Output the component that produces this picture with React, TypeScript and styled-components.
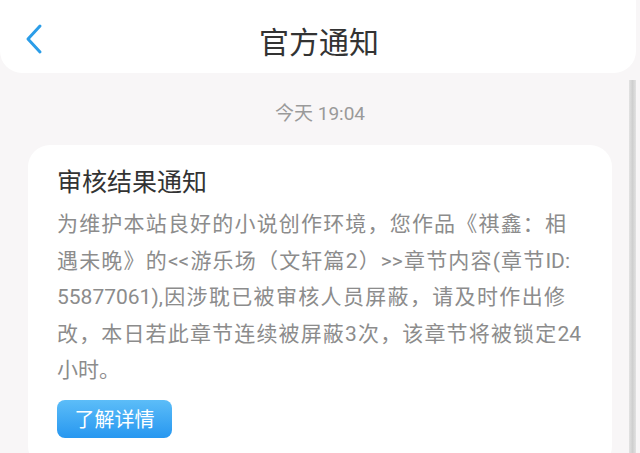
import styled, { createGlobalStyle } from "styled-components";

// each line of the notice, with the width it is spread to in the reference
const bodyLines = [
  { text: "为维护本站良好的小说创作环境，您作品《祺鑫：相", width: 509 },
  { text: "遇未晚》的<<游乐场（文轩篇2）>>章节内容(章节ID:", width: 513 },
  { text: "55877061),因涉耽已被审核人员屏蔽，请及时作出修", width: 508 },
  { text: "改，本日若此章节连续被屏蔽3次，该章节将被锁定24", width: 524 },
  { text: "小时。", width: 0 },
];

function App() {
  return (
    <Page>
      <GlobalStyle />
      <Header>
        <BackButton aria-label="返回">
          <svg width="20" height="32" viewBox="0 0 20 32" fill="none">
            <path
              d="M16 3 L4 16 L16 29"
              stroke="#2b9de8"
              strokeWidth="3"
              strokeLinecap="round"
              strokeLinejoin="round"
            />
          </svg>
        </BackButton>
        <Title>官方通知</Title>
      </Header>
      <Content>
        <Time>今天 19:04</Time>
        <Card>
          <CardTitle>审核结果通知</CardTitle>
          <Body lang="zh-CN">
            {bodyLines.map((line) => (
              <Line key={line.text} $width={line.width}>
                {line.text}
              </Line>
            ))}
          </Body>
          <DetailButton>了解详情</DetailButton>
        </Card>
      </Content>
      <ScrollThumb />
    </Page>
  );
}

const GlobalStyle = createGlobalStyle`
  html, body {
    margin: 0;
    padding: 0;
    background: #f8f6f7;
    overflow: hidden;
  }
  body {
    font-family: Roboto, "Noto Sans CJK SC", sans-serif;
  }
`;

const Page = styled.div`
  position: relative;
  width: 640px;
  height: 453px;
  overflow: hidden;
  background: #f8f6f7;
`;

const Header = styled.div`
  position: relative;
  display: flex;
  align-items: center;
  justify-content: center;
  width: 636px;
  height: 73px;
  background: #ffffff;
  border-radius: 0 0 22px 22px;
`;

const BackButton = styled.div`
  position: absolute;
  left: 24px;
  top: 23px;
  display: flex;
`;

const Title = styled.div`
  font-size: 30px;
  line-height: 36px;
  color: #333333;
  margin-top: 12px;
  margin-left: 2px;
`;

const Content = styled.div`
  display: flex;
  flex-direction: column;
  align-items: center;
  padding: 0 28px;
`;

const Time = styled.div`
  font-size: 19px;
  line-height: 24px;
  color: #9a9a9a;
  padding-top: 29px;
  margin-bottom: 19px;
`;

const Card = styled.div`
  align-self: stretch;
  display: flex;
  flex-direction: column;
  align-items: flex-start;
  background: #ffffff;
  border-radius: 22px;
  padding: 21px 29px 30px;
`;

const CardTitle = styled.div`
  font-size: 25px;
  line-height: 34px;
  color: #333333;
`;

const Body = styled.div`
  margin-top: 6px;
  font-size: 21px;
  line-height: 36.5px;
  color: #8c8c8c;
`;

const Line = styled.div<{ $width: number }>`
  white-space: nowrap;
  width: ${(p) => (p.$width ? `${p.$width}px` : "auto")};
  text-align: justify;
  text-align-last: ${(p) => (p.$width ? "justify" : "left")};
  text-justify: inter-character;
`;

const DetailButton = styled.button`
  margin-top: 11px;
  width: 115px;
  height: 38px;
  border: none;
  border-radius: 8px;
  background: linear-gradient(180deg, #5cbdf8 0%, #2797f0 100%);
  color: #ffffff;
  font-family: Roboto, "Noto Sans CJK SC", sans-serif;
  font-size: 20px;
  padding: 0;
`;

const ScrollThumb = styled.div`
  position: absolute;
  right: 4px;
  top: 80px;
  bottom: 0;
  width: 7px;
  background: linear-gradient(90deg, #e2e2e2, #cfcfcf 50%, #e2e2e2);
`;

export default App;
